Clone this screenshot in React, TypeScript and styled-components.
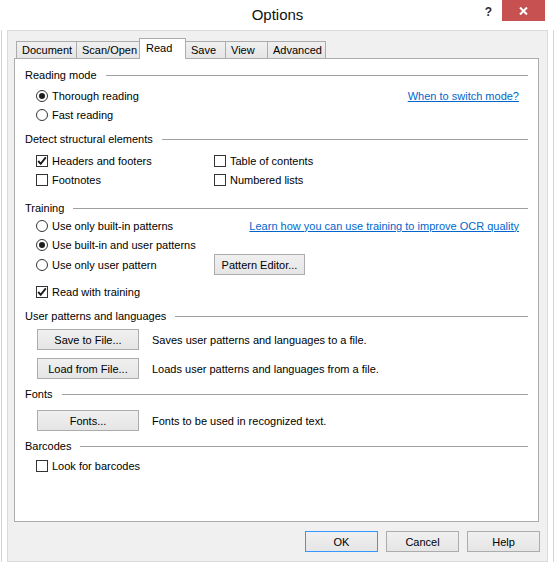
import React from "react";
import styled, { createGlobalStyle } from "styled-components";

const GlobalStyle = createGlobalStyle`
  html, body { margin: 0; padding: 0; background: #ffffff; }
  #root { width: 555px; height: 567px; }
`;

const Window = styled.div`
  width: 555px;
  height: 567px;
  display: flex;
  flex-direction: column;
  background: #ffffff;
  font-family: "Liberation Sans", Arial, sans-serif;
  font-size: 11px;
  color: #000;
  overflow: hidden;
`;

const TitleBar = styled.div`
  flex: none;
  height: 30px;
  display: grid;
  grid-template-columns: 1fr auto 1fr;
`;

const Title = styled.div`
  grid-column: 2;
  align-self: center;
  font-size: 15px;
  line-height: 18px;
  color: #111;
`;

const Caption = styled.div`
  grid-column: 3;
  justify-self: end;
  align-self: start;
  display: flex;
  align-items: flex-start;
  gap: 10px;
  padding-right: 10px;
`;

const HelpGlyph = styled.span`
  font-weight: bold;
  font-size: 12px;
  line-height: 24px;
  color: #2b2b2b;
`;

const CloseButton = styled.div`
  width: 43px;
  height: 21px;
  background: #c75050;
  display: flex;
  align-items: center;
  justify-content: center;
`;

const Frame = styled.div`
  flex: 1;
  display: flex;
  margin: 0 1px 5px 1px;
  border-left: 1px solid #d4d4d4;
  border-right: 1px solid #d4d4d4;
  padding: 0 5px;
`;

const Client = styled.div`
  flex: 1;
  display: flex;
  flex-direction: column;
  background: #f0f0f0;
  border: 1px solid #dadada;
  padding: 7px 8px 9px 6px;
`;

const TabStrip = styled.div`
  flex: none;
  display: flex;
  align-items: flex-end;
  height: 20px;
  margin-left: 2px;
`;

const Tab = styled.div<{ $w: number; $active?: boolean }>`
  box-sizing: border-box;
  width: ${(p) => p.$w}px;
  height: ${(p) => (p.$active ? 21 : 17)}px;
  margin-left: -1px;
  margin-bottom: ${(p) => (p.$active ? -1 : 0)}px;
  border: 1px solid #acacac;
  border-bottom: none;
  background: ${(p) => (p.$active ? "#ffffff" : "linear-gradient(#f0f0f0, #e5e5e5)")};
  display: flex;
  align-items: center;
  justify-content: flex-start;
  padding: 0 0 ${(p) => (p.$active ? 2 : 0)}px ${(p) => (p.$active ? 6 : 5)}px;
  white-space: nowrap;
  position: relative;
  z-index: ${(p) => (p.$active ? 2 : 1)};
  &:first-child { margin-left: 0; }
`;

const Panel = styled.div`
  flex: 1;
  display: flex;
  flex-direction: column;
  background: #ffffff;
  border: 1px solid #acacac;
  padding: 0 10px;
`;

const SectionHeader = styled.div<{ $mt: number }>`
  display: flex;
  align-items: center;
  gap: 9px;
  height: 16px;
  margin-top: ${(p) => p.$mt}px;
  white-space: nowrap;
  &::after {
    content: "";
    flex: 1;
    height: 1px;
    margin-top: 1px;
    background: #a0a0a0;
  }
`;

const OptionRow = styled.div<{ $mt?: number; $h?: number }>`
  display: grid;
  grid-template-columns: 178px 1fr;
  align-items: center;
  height: ${(p) => p.$h ?? 19}px;
  margin: ${(p) => p.$mt ?? 0}px 0 0 11px;
`;

const ActionRow = styled.div<{ $mt: number }>`
  display: grid;
  grid-template-columns: 102px 1fr;
  column-gap: 13px;
  align-items: center;
  height: 21px;
  margin: ${(p) => p.$mt}px 0 0 12px;
`;

const OptionLabel = styled.label`
  display: flex;
  align-items: center;
  gap: 4px;
  white-space: nowrap;
`;

const RadioCircle = styled.span<{ $on?: boolean }>`
  box-sizing: border-box;
  flex: none;
  width: 12px;
  height: 12px;
  border-radius: 50%;
  border: 1px solid #333;
  background: #fff;
  display: flex;
  align-items: center;
  justify-content: center;
  &::after {
    content: "";
    width: 6px;
    height: 6px;
    border-radius: 50%;
    background: #1c1c1c;
    display: ${(p) => (p.$on ? "block" : "none")};
  }
`;

const CheckSquare = styled.span`
  box-sizing: border-box;
  flex: none;
  width: 12px;
  height: 12px;
  border: 1px solid #333;
  background: #fff;
  display: flex;
  align-items: center;
  justify-content: center;
`;

const Link = styled.a`
  justify-self: end;
  margin-right: 9px;
  color: #0066cc;
  text-decoration: underline;
  white-space: nowrap;
  cursor: pointer;
`;

const PushButton = styled.button<{ $w: number }>`
  box-sizing: border-box;
  width: ${(p) => p.$w}px;
  height: 21px;
  padding: 0;
  border: 1px solid #acacac;
  background: linear-gradient(#f0f0f0, #e5e5e5);
  font-family: inherit;
  font-size: 11px;
  color: #000;
`;

const Description = styled.span`
  white-space: nowrap;
`;

const ButtonBar = styled.div`
  flex: none;
  display: flex;
  justify-content: flex-end;
  gap: 8px;
  margin-top: 9px;
  margin-right: -1px;
`;

const DialogButton = styled.button<{ $default?: boolean }>`
  box-sizing: border-box;
  width: 73px;
  height: 21px;
  padding: 0;
  border: 1px solid ${(p) => (p.$default ? "#3399ff" : "#acacac")};
  background: linear-gradient(#f0f0f0, #e5e5e5);
  font-family: inherit;
  font-size: 11px;
  color: #000;
`;

const Radio = ({ on, children }: { on?: boolean; children: React.ReactNode }) => (
  <OptionLabel>
    <RadioCircle $on={on} />
    <span>{children}</span>
  </OptionLabel>
);

const Check = ({ on, children }: { on?: boolean; children: React.ReactNode }) => (
  <OptionLabel>
    <CheckSquare>
      {on && (
        <svg width="10" height="10" viewBox="0 0 10 10">
          <path d="M1.2 5 L3.7 7.8 L8.8 1.4" fill="none" stroke="#1a1a1a" strokeWidth="1.9" />
        </svg>
      )}
    </CheckSquare>
    <span>{children}</span>
  </OptionLabel>
);

const tabs = [
  { label: "Document", w: 61 },
  { label: "Scan/Open", w: 64 },
  { label: "Read", w: 47, active: true },
  { label: "Save", w: 41 },
  { label: "View", w: 43 },
  { label: "Advanced", w: 59 },
];

export default function App() {
  return (
    <>
      <GlobalStyle />
      <Window>
        <TitleBar>
          <Title>Options</Title>
          <Caption>
            <HelpGlyph>?</HelpGlyph>
            <CloseButton>
              <svg width="9" height="8" viewBox="0 0 9 8">
                <path d="M1 0.5 L8 7.5 M8 0.5 L1 7.5" stroke="#fff" strokeWidth="2" />
              </svg>
            </CloseButton>
          </Caption>
        </TitleBar>
        <Frame>
          <Client>
            <TabStrip>
              {tabs.map((t) => (
                <Tab key={t.label} $w={t.w} $active={t.active}>
                  {t.label}
                </Tab>
              ))}
            </TabStrip>
            <Panel>
              <SectionHeader $mt={8}>Reading mode</SectionHeader>
              <OptionRow $mt={3}>
                <Radio on>Thorough reading</Radio>
                <Link>When to switch mode?</Link>
              </OptionRow>
              <OptionRow>
                <Radio>Fast reading</Radio>
              </OptionRow>

              <SectionHeader $mt={7}>Detect structural elements</SectionHeader>
              <OptionRow $mt={4}>
                <Check on>Headers and footers</Check>
                <Check>Table of contents</Check>
              </OptionRow>
              <OptionRow>
                <Check>Footnotes</Check>
                <Check>Numbered lists</Check>
              </OptionRow>

              <SectionHeader $mt={11}>Training</SectionHeader>
              <OptionRow>
                <Radio>Use only built-in patterns</Radio>
                <Link>Learn how you can use training to improve OCR quality</Link>
              </OptionRow>
              <OptionRow>
                <Radio on>Use built-in and user patterns</Radio>
              </OptionRow>
              <OptionRow $h={21}>
                <Radio>Use only user pattern</Radio>
                <PushButton $w={91}>Pattern Editor...</PushButton>
              </OptionRow>
              <OptionRow $mt={7}>
                <Check on>Read with training</Check>
              </OptionRow>

              <SectionHeader $mt={7}>User patterns and languages</SectionHeader>
              <ActionRow $mt={5}>
                <PushButton $w={102}>Save to File...</PushButton>
                <Description>Saves user patterns and languages to a file.</Description>
              </ActionRow>
              <ActionRow $mt={8}>
                <PushButton $w={102}>Load from File...</PushButton>
                <Description>Loads user patterns and languages from a file.</Description>
              </ActionRow>

              <SectionHeader $mt={7}>Fonts</SectionHeader>
              <ActionRow $mt={8}>
                <PushButton $w={102}>Fonts...</PushButton>
                <Description>Fonts to be used in recognized text.</Description>
              </ActionRow>

              <SectionHeader $mt={7}>Barcodes</SectionHeader>
              <OptionRow $mt={2}>
                <Check>Look for barcodes</Check>
              </OptionRow>
            </Panel>
            <ButtonBar>
              <DialogButton $default>OK</DialogButton>
              <DialogButton>Cancel</DialogButton>
              <DialogButton>Help</DialogButton>
            </ButtonBar>
          </Client>
        </Frame>
      </Window>
    </>
  );
}
